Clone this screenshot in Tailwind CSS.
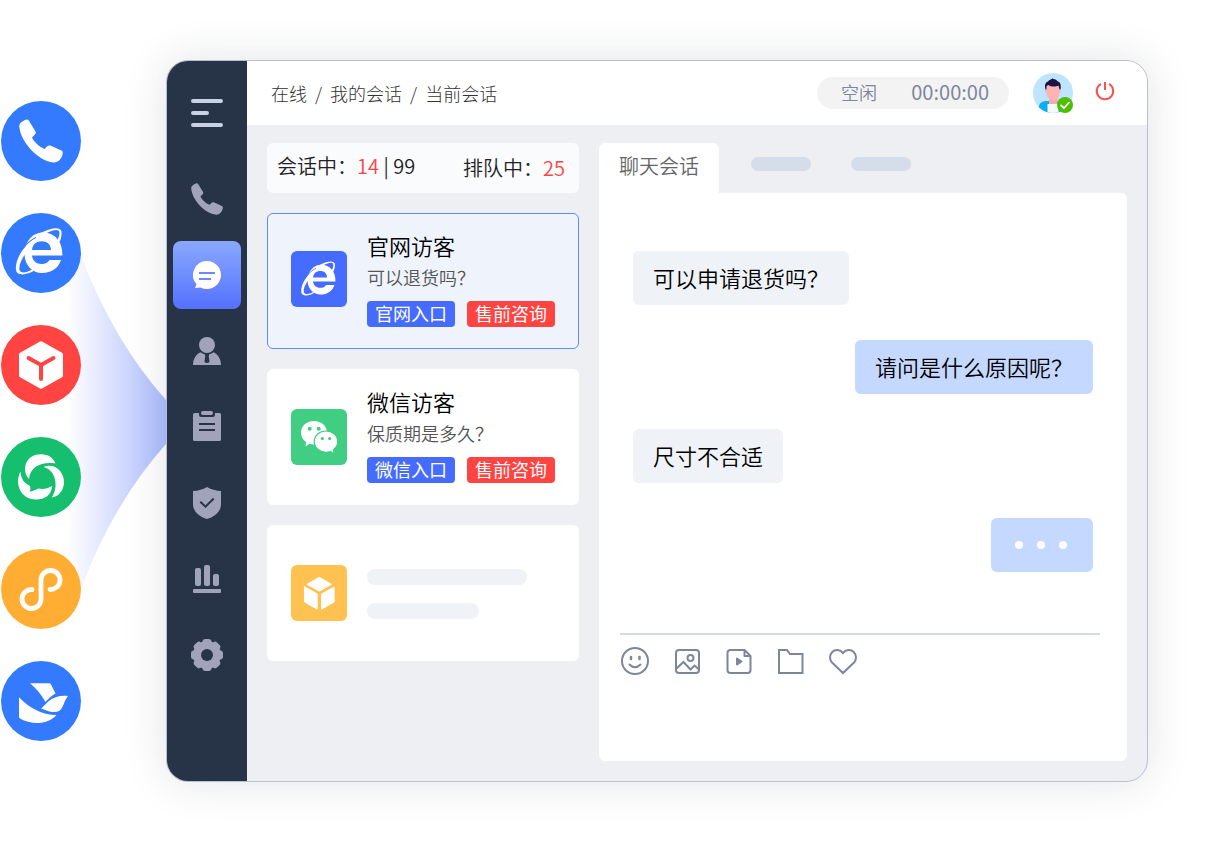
<!DOCTYPE html>
<html lang="zh-CN">
<head>
    <meta charset="UTF-8">
    <meta name="viewport" content="width=device-width, initial-scale=1.0">
    <title>在线客服</title>
    <script src="https://cdn.jsdelivr.net/npm/@tailwindcss/browser@4"></script>
</head>
<body class="bg-white font-['Noto_Sans_CJK_SC',sans-serif]">

<!-- shared icons -->
<svg class="hidden">
    <symbol id="icon-phone" viewBox="18 16 44 44">
        <path fill="currentColor" d="M19 20.500 C21 18.500 23.500 17 25.500 16.500 Q27 16.200 27.800 17.500 L34.500 28.500 Q35.300 29.800 34.300 31 L31 34.500 C33 39 38.500 44 43.500 46 L46.500 43 Q47.800 42 49.300 42.600 L60.500 47.500 Q62 48.300 61.800 50 C61 56 57 59.800 52.500 59.500 C37 58 19.500 39 18.300 23.500 Q18.200 21.500 19 20.500Z"/>
    </symbol>
    <symbol id="icon-ie" viewBox="0 0 80 80">
        <path fill="#fff" fill-rule="evenodd" d="M61.300 42.500 H31 C31.500 48 35.500 51 40.500 51 C44.500 51 47 49.500 48.500 47 H60 C57.500 55 50.500 60 41 60 C31.500 60 24 52.500 23.500 42 C23.500 29 31 19.500 42 19.500 C54 19.500 62 29 61.300 42.500Z M31 37 H50 C49.500 31 46 28.300 40.800 28.300 C35.500 28.300 31.800 31 31 37Z"/>
        <path fill="none" stroke="currentColor" stroke-width="1.100" d="M21 37 C25 31 29 27.500 35 24.500"/>
        <path fill="#fff" d="M35 25 C24 31 13.500 46 15 57 C16 63.500 26 62 33 57.800 L31 56.500 C25 60 19.500 60.500 18.500 57 C17.500 52 21 45 25.500 39.500Z"/>
        <path fill="#fff" d="M40 19.800 C51 14 60 13.500 60.600 19 C60.800 22.500 60 26 58.500 29 L56.500 27 C58.500 23 59.300 19 57.500 17.500 C55.500 16 50 17.500 45 20.500Z"/>
    </symbol>
</svg>

<div class="flex min-h-screen py-15 pr-15">

    <!-- channels -->
    <aside class="relative w-[166px] shrink-0 pl-px pt-[41px]">
        <svg class="absolute right-0 top-[196px] w-[98px] h-[332px]" viewBox="68 256 98 332">
            <defs>
                <linearGradient id="beam" x1="0" x2="1">
                    <stop offset="0" stop-color="#4a6cf7" stop-opacity="0"/>
                    <stop offset="1" stop-color="#4a6cf7" stop-opacity=".46"/>
                </linearGradient>
            </defs>
            <path fill="url(#beam)" d="M68 256 H81 Q114 342 166 400 V444 Q114 502 81 588 H68Z"/>
        </svg>
        <ul class="relative flex flex-col gap-8">
            <li><a href="#" aria-label="电话" class="flex size-20 items-center justify-center rounded-full bg-[#337aff] text-white"><svg class="size-11"><use href="#icon-phone"/></svg></a></li>
            <li><a href="#" aria-label="官网" class="flex size-20 rounded-full bg-[#337aff] text-[#337aff]"><svg class="size-20"><use href="#icon-ie"/></svg></a></li>
            <li><a href="#" aria-label="产品" class="flex size-20 rounded-full bg-[#ff4442]">
                <svg class="size-20" viewBox="0 0 80 80" stroke-linecap="round" stroke-linejoin="round">
                    <path fill="#fff" stroke="#fff" stroke-width="4" d="M40 18.200 L60 29.500 V50.500 L40 61.800 L20 50.500 V29.500Z"/>
                    <path fill="none" stroke="#ff4442" stroke-width="4" d="M27.500 33 L40 40 L52.500 33 M40 40 V54"/>
                </svg></a></li>
            <li><a href="#" aria-label="企业微信" class="flex size-20 rounded-full bg-[#15bf6e]">
                <svg class="size-20" viewBox="0 0 80 80" fill="#fff">
                    <path d="M28 42 C21 35 22.500 17.500 40 17.200 C47 17.500 52 20 54.500 26.500 C41 24.500 29.500 29 28 42Z"/>
                    <path d="M42.500 30 C54 25.500 63 35 63 45 C63 54 57 59.800 50.800 60.500 C58 50 55 33 42.500 30Z"/>
                    <path d="M19.500 34.500 C13 47 20 62.500 35 62.500 C44 62.500 50.500 58 51 49 C46 52 42 52.500 37.500 51.500 C35 53 31 54.500 28.500 54.500 C29.800 52.500 29.800 50 28.500 48.500 C23 46 20 42 19.500 34.500Z"/>
                </svg></a></li>
            <li><a href="#" aria-label="小程序" class="flex size-20 rounded-full bg-[#ffae33]">
                <svg class="size-20" viewBox="0 0 80 80" fill="none" stroke="#fff" stroke-width="4.800" stroke-linecap="round">
                    <path d="M49 40.500 A9.500 9.500 0 1 0 40 31 V50 A9.500 9.500 0 1 1 31 40.500"/>
                </svg></a></li>
            <li><a href="#" aria-label="飞书" class="flex size-20 rounded-full bg-[#337aff]">
                <svg class="size-20" viewBox="0 0 80 80" fill="#fff">
                    <path d="M29 22.300 H48 Q49.300 22.300 50 23.500 L54.500 32.500 C50.500 34.500 47 38 44.500 41 C40.500 34 35 27 29 22.300Z"/>
                    <path d="M67 35 C64 38.500 63.500 42 61.300 46.300 C58 52.500 52 52.500 40.300 47.500 C47 41 52 33.500 67 35Z"/>
                    <path d="M18 36.300 C28 47 41 54 55.500 54 C47 64 30 64 19 57.500 Q18 57 18 55.500Z"/>
                </svg></a></li>
        </ul>
    </aside>

    <!-- workbench -->
    <div class="flex flex-1 overflow-hidden rounded-[22px] border border-[#b9bfd3] bg-[#eeeff3] shadow-[0_0_44px_rgba(30,40,60,0.13)]">

        <nav class="flex w-20 shrink-0 flex-col items-center gap-2 bg-[#273447] pt-[18px] text-[#a1a3bb]">
            <button type="button" aria-label="菜单" class="mb-[10px] flex size-17 items-center justify-center">
                <svg class="size-8" viewBox="0 0 32 32" stroke="#c9d2e3" stroke-width="4" stroke-linecap="round"><path d="M2 4 H30 M2 16 H16 M2 28 H30"/></svg>
            </button>
            <a href="#" aria-label="电话" class="flex size-17 items-center justify-center"><svg class="size-8"><use href="#icon-phone"/></svg></a>
            <a href="#" aria-label="会话" class="flex size-17 items-center justify-center rounded-lg bg-linear-to-b from-[#8ba8ff] to-[#5570ff]">
                <svg class="size-8" viewBox="0 0 32 32">
                    <path fill="#fff" d="M16 2 A14 14 0 1 1 9.500 28.400 L4 28.900 L5.500 25.200 A14 14 0 0 1 16 2Z"/>
                    <path stroke="#6d87ff" stroke-width="2" d="M8 14 H24 M8 20 H20"/>
                </svg>
            </a>
            <a href="#" aria-label="客户" class="flex size-17 items-center justify-center">
                <svg class="size-8" viewBox="0 0 32 32" fill="currentColor">
                    <circle cx="16" cy="10" r="8"/>
                    <path d="M2 30 C2 24 5 19.500 9.300 17.300 Q12.500 19.500 16 19.500 Q19.500 19.500 22.700 17.300 C27 19.500 30 24 30 30Z"/>
                    <path fill="#273447" d="M13.500 18.500 H18.500 L17.700 21 L18.600 27 Q16 29 13.400 27 L14.300 21Z"/>
                </svg>
            </a>
            <a href="#" aria-label="工单" class="flex size-17 items-center justify-center">
                <svg class="size-8" viewBox="0 0 32 32" fill="currentColor">
                    <path d="M3.500 2 H8 V4 Q8 6 10 6 H22 Q24 6 24 4 V2 H28.500 Q30 2 30 3.500 V28.500 Q30 30 28.500 30 H3.500 Q2 30 2 28.500 V3.500 Q2 2 3.500 2Z"/>
                    <rect x="10" y="0" width="12" height="4" rx="2"/>
                    <path stroke="#273447" stroke-width="2" d="M8 13 H24 M8 19 H24"/>
                </svg>
            </a>
            <a href="#" aria-label="质检" class="flex size-17 items-center justify-center">
                <svg class="size-8" viewBox="0 0 32 32">
                    <path fill="currentColor" d="M16 0 C20 2.500 25 3.800 30 4 V17 C30 25 23 30 16 32 C9 30 2 25 2 17 V4 C7 3.800 12 2.500 16 0Z"/>
                    <path fill="none" stroke="#273447" stroke-width="2" d="M9.300 14.700 L14.500 19.700 L22.700 11.500"/>
                </svg>
            </a>
            <a href="#" aria-label="报表" class="flex size-17 items-center justify-center">
                <svg class="size-8" viewBox="0 0 32 32" fill="currentColor">
                    <rect x="4" y="5" width="6" height="18" rx="2"/>
                    <rect x="13" y="2" width="6" height="21" rx="2"/>
                    <rect x="22" y="11" width="6" height="12" rx="2"/>
                    <rect x="2" y="26" width="28" height="4" rx="1"/>
                </svg>
            </a>
            <a href="#" aria-label="设置" class="flex size-17 items-center justify-center">
                <svg class="size-8" viewBox="0 0 32 32" fill="currentColor">
                    <circle cx="16" cy="16" r="14"/>
                    <rect x="11.500" width="9" height="32" rx="3"/>
                    <rect x="11.500" width="9" height="32" rx="3" transform="rotate(45 16 16)"/>
                    <rect x="11.500" width="9" height="32" rx="3" transform="rotate(90 16 16)"/>
                    <rect x="11.500" width="9" height="32" rx="3" transform="rotate(135 16 16)"/>
                    <circle cx="16" cy="16" r="6" fill="#273447"/>
                </svg>
            </a>
        </nav>

        <div class="flex min-w-0 flex-1 flex-col">
            <header class="flex h-16 shrink-0 items-center justify-between bg-white pl-6 pr-8">
                <ol class="flex gap-2 text-lg font-light text-[#333]">
                    <li><a href="#">在线</a></li>
                    <li>/</li>
                    <li><a href="#">我的会话</a></li>
                    <li>/</li>
                    <li>当前会话</li>
                </ol>
                <div class="flex items-center">
                    <div class="flex h-8 w-48 items-center justify-between rounded-full bg-[#f3f3f3] pb-[2px] pl-6 pr-5 text-[#7c879d]">
                        <span class="text-lg font-[350]">空闲</span>
                        <span class="text-xl">00:00:00</span>
                    </div>
                    <svg class="ml-6 size-10" viewBox="0 0 40 40" role="img" aria-label="头像">
                        <clipPath id="face"><circle cx="20" cy="20" r="20"/></clipPath>
                        <g clip-path="url(#face)">
                            <rect width="40" height="40" fill="#bfe4ff"/>
                            <path fill="#08aef2" d="M6 40 V33 C7 29 10 28 15 28 L25 28 L34 32 V40Z"/>
                            <path fill="#f7f8fa" d="M14.500 40 V31 H25.500 V40Z"/>
                            <path fill="#fba9ab" d="M16 25 H24.500 V31 H16Z"/>
                            <path fill="#ffb4b4" d="M13.500 12 H26.500 V16 Q28 16 27.700 18 Q27.500 20 26.500 20 C26.500 24 24 27 20 27 C16 27 13.500 24 13.500 20 Q12.300 20 12 18 Q12 16 13.500 16Z"/>
                            <path fill="#1b1145" d="M12.500 16.500 C11.500 12.500 12 9.500 15 8.500 C16 6.500 18 6.800 19.500 5.200 C20.500 6.500 23 5.800 24.500 8.200 C27.500 9 28.300 12 27.500 16.500 H26.500 L25.500 12.500 C23 14 18 14 15.500 12 L13.500 13 V16.500Z"/>
                        </g>
                        <circle cx="32" cy="32" r="8" fill="#4bbf00"/>
                        <path fill="none" stroke="#fff" stroke-width="1.700" d="M27.500 32 L31 35 L36.500 29"/>
                    </svg>
                    <button type="button" aria-label="退出" class="ml-[22px] pb-1">
                        <svg class="size-5" viewBox="0 0 20 20" fill="none" stroke="#ff5050" stroke-width="2"><path d="M6 2.900 A8.200 8.200 0 1 0 14 2.900 M10 1 V9"/></svg>
                    </button>
                </div>
            </header>

            <main class="flex flex-1 gap-5 px-5 pb-5 pt-[18px]">

                <!-- conversations -->
                <section class="flex w-78 shrink-0 flex-col gap-5">
                    <div class="flex h-[50px] items-center justify-between rounded-md bg-[#fafbfd] pl-[10px] pr-[14px] text-xl font-[350] text-[#222]">
                        <p class="pb-1">会话中：<span class="text-[#ff4442]">14</span> | 99</p>
                        <p>排队中：<span class="text-[#ff4442]">25</span></p>
                    </div>

                    <button type="button" class="flex h-34 items-start gap-5 rounded-md border border-[#5b8cff] bg-[#eef3fc] pl-[23px] pt-[17px] text-left">
                        <svg class="mt-5 size-14 rounded-md bg-[#456bff] text-[#456bff]" viewBox="1 1 76 76"><use href="#icon-ie" width="80" height="80"/></svg>
                        <span class="flex flex-col">
                            <span class="text-[22px] font-[350] leading-7 text-black">官网访客</span>
                            <span class="text-lg font-[350] leading-9 text-[#555]">可以退货吗？</span>
                            <span class="mt-[6px] flex gap-3 text-lg leading-6 text-white">
                                <span class="rounded bg-[#456bff] px-2 pb-[2px]">官网入口</span>
                                <span class="rounded bg-[#ff4442] px-2 pb-[2px]">售前咨询</span>
                            </span>
                        </span>
                    </button>

                    <button type="button" class="flex h-34 items-start gap-5 rounded-md border border-white bg-white pl-[23px] pt-[17px] text-left">
                        <svg class="mt-[22px] size-14 rounded-md bg-[#40ce82]" viewBox="0 0 56 56" fill="#fff">
                            <path d="M23 12 C30.500 12 36 17 36 23.700 C36 30.500 30.500 35.400 23 35.400 Q20.500 35.400 18.500 34.800 L14.500 37.500 L15 33 C12 31 10 27.500 10 23.700 C10 17 15.500 12 23 12Z"/>
                            <path stroke="#40ce82" stroke-width="1.200" d="M35 22 C41.500 22 46.700 26.500 46.700 32.500 C46.700 36 45 38.800 42.500 40.700 L43.300 45 L39.300 42.500 Q37.500 43.300 35 43.300 C28.500 43.300 23.300 38.500 23.300 32.500 C23.300 26.500 28.500 22 35 22Z"/>
                            <g fill="#40ce82">
                                <circle cx="18.700" cy="19.700" r="2"/><circle cx="27.700" cy="19.700" r="2"/>
                                <circle cx="31.300" cy="29.500" r="1.600"/><circle cx="38.700" cy="29.500" r="1.600"/>
                            </g>
                        </svg>
                        <span class="flex flex-col">
                            <span class="text-[22px] font-[350] leading-7 text-black">微信访客</span>
                            <span class="text-lg font-[350] leading-9 text-[#555]">保质期是多久？</span>
                            <span class="mt-[6px] flex gap-3 text-lg leading-6 text-white">
                                <span class="rounded bg-[#456bff] px-2 pb-[2px]">微信入口</span>
                                <span class="rounded bg-[#ff4442] px-2 pb-[2px]">售前咨询</span>
                            </span>
                        </span>
                    </button>

                    <div class="flex h-34 items-center gap-5 rounded-md bg-white pl-6">
                        <svg class="size-14 rounded-md bg-[#ffc14f]" viewBox="0 0 56 56" fill="#fff" stroke="#fff" stroke-linejoin="round">
                            <path d="M28.300 12.300 L40.500 19.300 L28.300 26.100 L16 19.300Z"/>
                            <path d="M13.600 21.700 L26.200 29 V44.200 L13.600 37Z"/>
                            <path d="M30.500 29 L43.100 22.100 V37 L30.500 44.200Z"/>
                        </svg>
                        <div class="flex flex-col gap-[18px] pt-[2px]">
                            <div class="h-4 w-40 rounded-full bg-[#eff3f7]"></div>
                            <div class="h-4 w-28 rounded-full bg-[#eff3f7]"></div>
                        </div>
                    </div>
                </section>

                <!-- chat -->
                <section class="flex min-w-0 flex-1 flex-col">
                    <div class="flex h-[50px]">
                        <button type="button" class="rounded-t-md bg-white px-5 pb-1 text-xl font-[350] text-[#666]">聊天会话</button>
                        <div class="ml-8 mt-[14px] h-[14px] w-15 rounded-full bg-[#d5dcea]"></div>
                        <div class="ml-10 mt-[14px] h-[14px] w-15 rounded-full bg-[#d5dcea]"></div>
                    </div>

                    <div class="flex flex-1 flex-col rounded-b-md rounded-tr-md bg-white">
                        <div class="flex flex-1 flex-col items-start gap-[35px] px-[34px] pt-[58px] text-[22px] font-[350] leading-[52px] text-black">
                            <p class="rounded-md bg-[#eff3f7] px-5 pb-[2px]">可以申请退货吗？</p>
                            <p class="self-end rounded-md bg-[#c5d8ff] px-5 pb-[2px]">请问是什么原因呢？</p>
                            <p class="rounded-md bg-[#eff3f7] px-5 pb-[2px]">尺寸不合适</p>
                            <div class="flex h-[54px] items-center gap-[14px] self-end rounded-md bg-[#c5d8ff] pl-6 pr-[26px]">
                                <span class="size-2 rounded-full bg-white"></span>
                                <span class="size-2 rounded-full bg-white"></span>
                                <span class="size-2 rounded-full bg-white"></span>
                            </div>
                        </div>

                        <div class="ml-[21px] mr-[27px] border-t-2 border-[#d5d9e8] pt-3">
                            <div class="flex gap-6 pl-px text-[#7c879d]">
                                <button type="button" aria-label="表情"><svg class="size-7" viewBox="0 0 28 28" fill="none" stroke="currentColor" stroke-width="2" stroke-linecap="round"><circle cx="14" cy="14" r="13"/><path stroke-width="2.500" d="M10 10 V12 M18.500 10 V12"/><path d="M8.500 17.500 Q14 23 19.500 17.500"/></svg></button>
                                <button type="button" aria-label="图片"><svg class="size-7" viewBox="0 0 28 28" fill="none" stroke="currentColor" stroke-width="2"><rect x="3" y="3" width="23" height="23" rx="3"/><circle cx="17.500" cy="11" r="3"/><path d="M3.500 21.500 L10.500 15 L17.500 22.500 L21.500 18.500 L26 22.500"/></svg></button>
                                <button type="button" aria-label="视频"><svg class="size-7" viewBox="0 0 28 28" fill="none" stroke="currentColor" stroke-width="2" stroke-linejoin="round"><path d="M19.500 3 H5.500 Q2.500 3 2.500 6 V23 Q2.500 26 5.500 26 H22.500 Q25.500 26 25.500 23 V9 L19.500 3 V9 H25.500"/><path fill="currentColor" d="M12 11.500 L16.500 14.500 L12 17.500Z"/></svg></button>
                                <button type="button" aria-label="文件"><svg class="size-7" viewBox="0 0 28 28" fill="none" stroke="currentColor" stroke-width="2"><path d="M2 3 H10 L13 7 H25.500 V26 H2Z"/></svg></button>
                                <button type="button" aria-label="收藏"><svg class="size-7" viewBox="0 0 28 28" fill="none" stroke="currentColor" stroke-width="2"><path d="M14 6 C11 2.500 6.500 2 3.500 4.800 C0.300 8 0.300 12.500 3 15.500 L14 26 L25 15.500 C27.700 12.500 27.700 8 24.500 4.800 C21.500 2 17 2.500 14 6Z"/></svg></button>
                            </div>
                            <textarea id="message" aria-label="输入消息" class="mt-2 block h-[78px] w-full resize-none text-lg outline-none"></textarea>
                        </div>
                    </div>
                </section>
            </main>
        </div>
    </div>
</div>
</body>
</html>
